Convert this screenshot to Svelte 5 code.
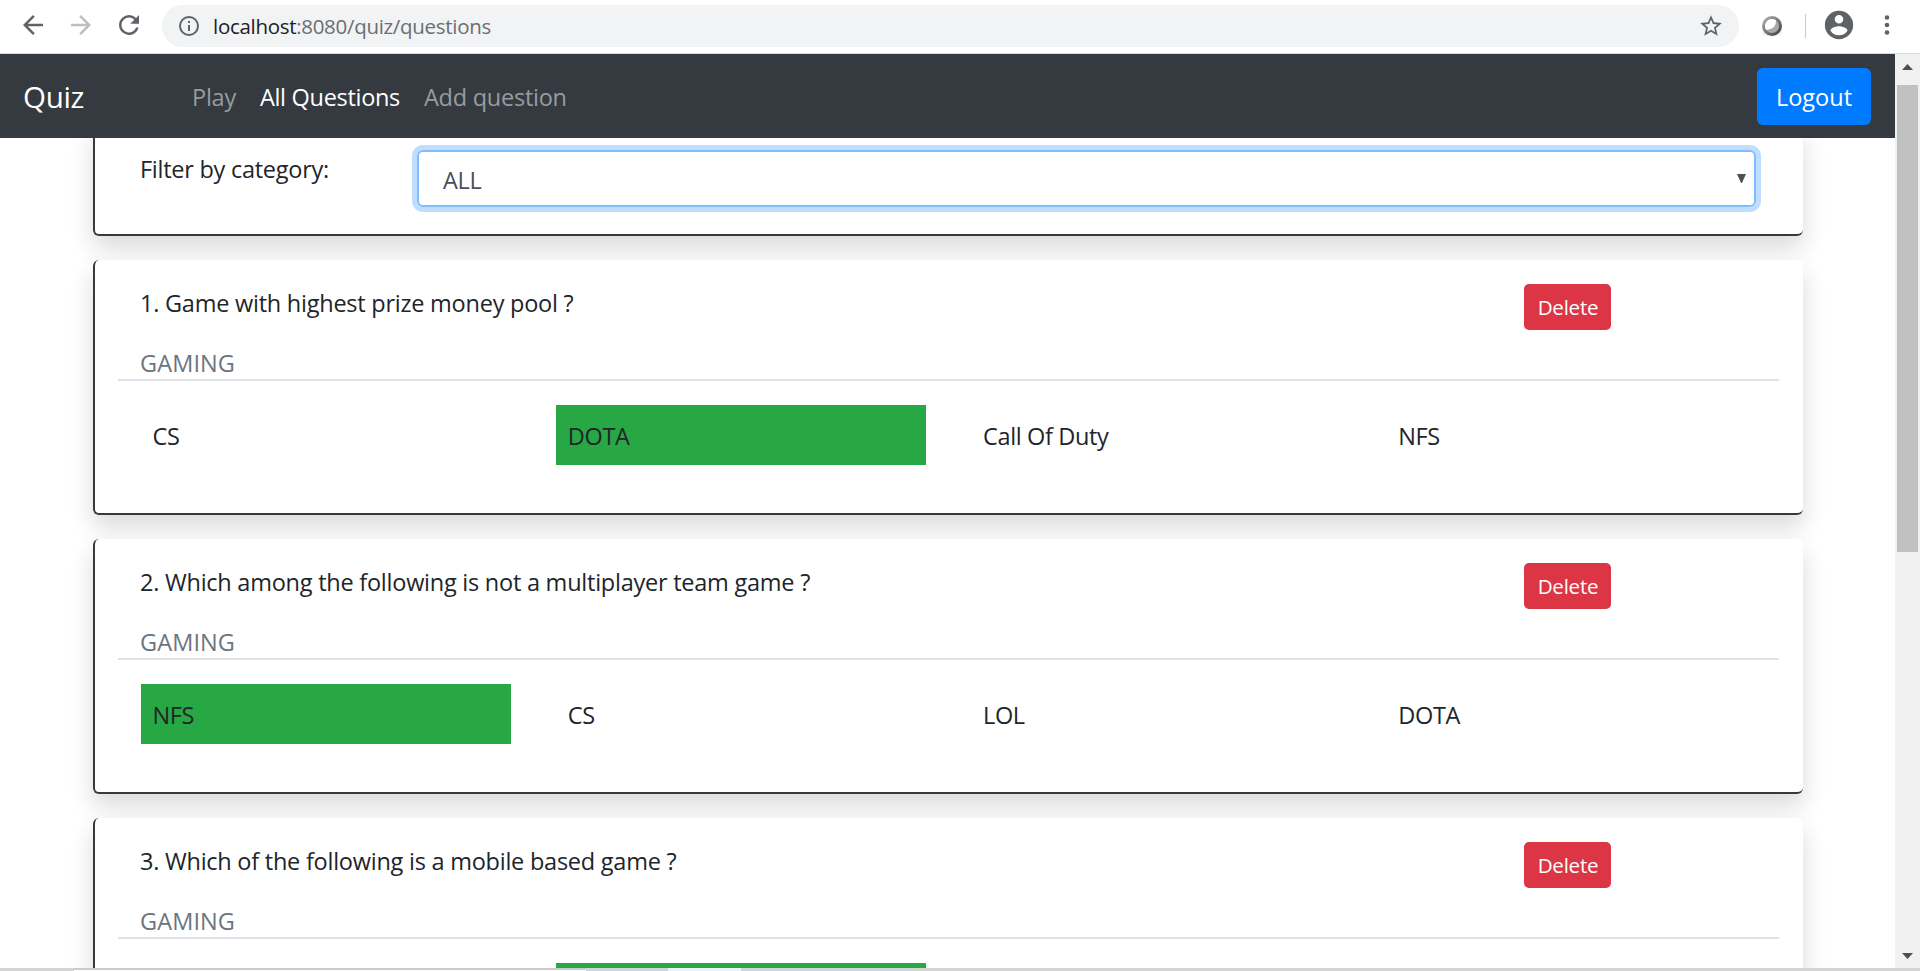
<script>
  const questions = [
    { text: 'Game with highest prize money pool ?', category: 'GAMING', options: ['CS', 'DOTA', 'Call Of Duty', 'NFS'], answer: 1 },
    { text: 'Which among the following is not a multiplayer team game ?', category: 'GAMING', options: ['NFS', 'CS', 'LOL', 'DOTA'], answer: 0 },
    { text: 'Which of the following is a mobile based game ?', category: 'GAMING', options: ['', '', '', ''], answer: 1 }
  ];
</script>

<div class="window">
  <header class="toolbar">
    <div class="history">
      <svg width="30" height="30" viewBox="0 0 24 24" fill="#5f6368"><path d="M20 11H7.83l5.59-5.59L12 4l-8 8 8 8 1.41-1.41L7.83 13H20v-2z" /></svg>
      <svg width="30" height="30" viewBox="0 0 24 24" fill="#bcbec0"><path d="M12 4l-1.41 1.41L16.17 11H4v2h12.17l-5.58 5.59L12 20l8-8z" /></svg>
      <svg width="30" height="30" viewBox="0 0 24 24" fill="#5f6368"><path d="M17.65 6.35A7.96 7.96 0 0 0 12 4a8 8 0 1 0 7.73 10h-2.08A6 6 0 1 1 12 6c1.66 0 3.14.69 4.22 1.78L13 11h7V4l-2.35 2.35z" /></svg>
    </div>
    <div class="address">
      <svg width="24" height="24" viewBox="0 0 24 24" fill="#5f6368"><path d="M11 7h2v2h-2zm0 4h2v6h-2zm1-9a10 10 0 1 0 0 20 10 10 0 0 0 0-20zm0 18a8 8 0 1 1 0-16 8 8 0 0 1 0 16z" /></svg>
      <span class="url"><b>localhost</b>:8080/quiz/questions</span>
      <svg width="26" height="26" viewBox="0 0 24 24" fill="#5f6368"><path d="M22 9.24l-7.19-.62L12 2 9.19 8.63 2 9.24l5.46 4.73L5.82 21 12 17.27 18.18 21l-1.63-7.03L22 9.24zM12 15.4l-3.76 2.27 1-4.28-3.32-2.88 4.38-.38L12 6.1l1.71 4.04 4.38.38-3.32 2.88 1 4.28L12 15.4z" /></svg>
    </div>
    <svg class="extension" width="22" height="22" viewBox="0 0 22 22">
      <defs>
        <linearGradient id="ring" x1="0" y1="0" x2="1" y2="1"><stop offset="0.2" stop-color="#a0a0a0" /><stop offset="0.8" stop-color="#505050" /></linearGradient>
      </defs>
      <ellipse cx="11" cy="18" rx="10" ry="3.6" fill="#f3f3f3" />
      <circle cx="11" cy="11" r="10" fill="url(#ring)" />
      <circle cx="11" cy="11" r="7" fill="#a9a9a9" />
      <path d="M15 5.3Q15.6 14.4 5.2 15A7 7 0 0 1 15 5.3z" fill="#fff" />
    </svg>
    <i class="separator"></i>
    <svg class="avatar" width="34" height="34" viewBox="0 0 24 24" fill="#5f6368"><path d="M12 2a10 10 0 1 0 0 20 10 10 0 0 0 0-20zm0 3a3 3 0 1 1 0 6 3 3 0 0 1 0-6zm0 14.2A7.2 7.2 0 0 1 6 15.98c.03-1.99 4-3.08 6-3.08s5.97 1.09 6 3.08a7.2 7.2 0 0 1-6 3.22z" /></svg>
    <svg class="menu" width="6" height="24" viewBox="0 0 6 24" fill="#5f6368"><circle cx="3" cy="4.5" r="2.3" /><circle cx="3" cy="12" r="2.3" /><circle cx="3" cy="19.5" r="2.3" /></svg>
  </header>

  <div class="viewport">
    <div class="page">
      <nav>
        <span class="brand">Quiz</span>
        <span class="link">Play</span>
        <span class="link active">All Questions</span>
        <span class="link">Add question</span>
        <button class="logout">Logout</button>
      </nav>
      <main>
        <section class="card filter">
          <span class="label">Filter by category:</span>
          <div class="select">
            <span>ALL</span>
            <svg width="9" height="9" viewBox="0 0 9 9" fill="#495057"><path d="M0 0h9L4.9 9h-.8z" /></svg>
          </div>
        </section>
        {#each questions as q, i}
          <section class="card">
            <div class="head">
              <span class="question">{i + 1}. {q.text}</span>
              <button class="delete">Delete</button>
            </div>
            <div class="category">{q.category}</div>
            <div class="options">
              {#each q.options as option, n}
                <div class="option" class:correct={n === q.answer}><span>{option}</span></div>
              {/each}
            </div>
          </section>
        {/each}
      </main>
    </div>
    <aside class="scrollbar">
      <svg width="11" height="6" viewBox="0 0 11 6" fill="#505050"><path d="M0 6h11L5.5 0z" /></svg>
      <div class="thumb"></div>
      <svg class="down" width="11" height="6" viewBox="0 0 11 6" fill="#505050"><path d="M0 0h11L5.5 6z" /></svg>
    </aside>
  </div>
  <footer><i class="field"></i><i class="tab"></i></footer>
</div>

<style>
  :global(body) { margin: 0; overflow: hidden; background: #fff; }
  .window { width: 1920px; height: 971px; display: flex; flex-direction: column; overflow: hidden; font-family: 'Open Sans', 'Noto Sans', sans-serif; font-size: 23.5px; line-height: 38px; color: #212529; white-space: nowrap; }
  .window * { box-sizing: border-box; }
  svg { display: block; flex: none; }
  button { font-family: inherit; color: #fff; border: 0; padding: 0; margin: 0; }

  .toolbar { flex: none; height: 54px; display: flex; align-items: flex-start; border-bottom: 1px solid #d9dbde; padding-top: 5px; }
  .history { display: flex; gap: 18px; padding: 5px 0 0 18px; width: 162px; }
  .address { width: 1577px; height: 42px; border-radius: 21px; background: #f1f3f4; display: flex; align-items: center; padding: 0 15px 0 15px; }
  .url { flex: 1; padding-left: 12px; font-size: 20.5px; letter-spacing: -0.3px; color: #6b6e72; }
  .url b { font-weight: 400; color: #202124; }
  .extension { margin: 10px 0 0 22px; }
  .separator { width: 1px; height: 24px; background: #c8cacc; margin: 9px 0 0 22px; }
  .avatar { margin: 3px 0 0 16px; }
  .menu { margin: 8px 0 0 28px; }

  .viewport { flex: none; height: 914px; display: flex; }
  .page { width: 1895px; overflow: hidden; }
  nav { position: relative; z-index: 1; height: 84px; background: #343a40; display: flex; align-items: center; padding: 0 24px 0 23px; }
  .brand { width: 169px; padding-top: 2px; font-size: 29.5px; letter-spacing: -0.3px; color: #fff; }
  .link { margin-right: 24px; height: 36px; color: #999c9f; letter-spacing: -0.25px; }
  .active { color: #fff; letter-spacing: -0.3px; }
  .logout { margin-left: auto; width: 114px; height: 57px; border-radius: 6px; background: #007bff; font-size: 23.5px; line-height: 58px; }

  main { padding-left: 93px; margin-top: -12px; }
  .card { width: 1710px; height: 255px; margin-bottom: 24px; padding: 24px 24px 0 23px; background: #fff; border-left: 2px solid #343a40; border-bottom: 2px solid #343a40; border-radius: 6px; box-shadow: 0 12px 24px rgba(0, 0, 0, 0.15); }
  .filter { height: 110px; display: flex; padding-left: 45px; }
  .label { width: 277px; letter-spacing: -0.26px; }
  .select { width: 1339px; height: 57px; display: flex; justify-content: space-between; padding: 9px 18px 0 24px; border: 2px solid #80bdff; border-radius: 6px; box-shadow: 0 0 0 5px rgba(0, 123, 255, 0.25); color: #495057; letter-spacing: -0.3px; }
  .select svg { margin-top: 13px; margin-right: -10px; }
  .head { height: 60px; display: flex; padding-left: 22px; }
  .question { width: 1384px; letter-spacing: -0.24px; }
  .delete { width: 87px; height: 46px; padding-left: 1px; border-radius: 5px; background: #dc3545; font-size: 20.6px; letter-spacing: -0.25px; line-height: 47px; }
  .category { height: 37px; padding-left: 22px; border-bottom: 2px solid #dee2e6; color: #6c757d; letter-spacing: 0.1px; }
  .options { display: grid; grid-template-columns: repeat(4, 1fr); margin-top: 24px; }
  .option { height: 60px; margin: 0 22.5px; padding: 12px; letter-spacing: -0.35px; }
  .correct { background: #28a745; }

  .scrollbar { width: 25px; background: #f1f1f1; display: flex; flex-direction: column; padding: 10px 0 9px 2px; }
  .scrollbar svg { margin-left: 5px; }
  .thumb { width: 21px; height: 467px; margin-top: 15px; background: #c1c1c1; }
  .scrollbar .down { margin-top: auto; }
  footer { height: 3px; background: #d4d4d4; display: flex; }
  .field { width: 512px; margin-left: 74px; background: #fff; border-top: 2px solid #cbcbcb; }
  .tab { width: 73px; margin-left: 82px; background: #f0f0f0; }
</style>
